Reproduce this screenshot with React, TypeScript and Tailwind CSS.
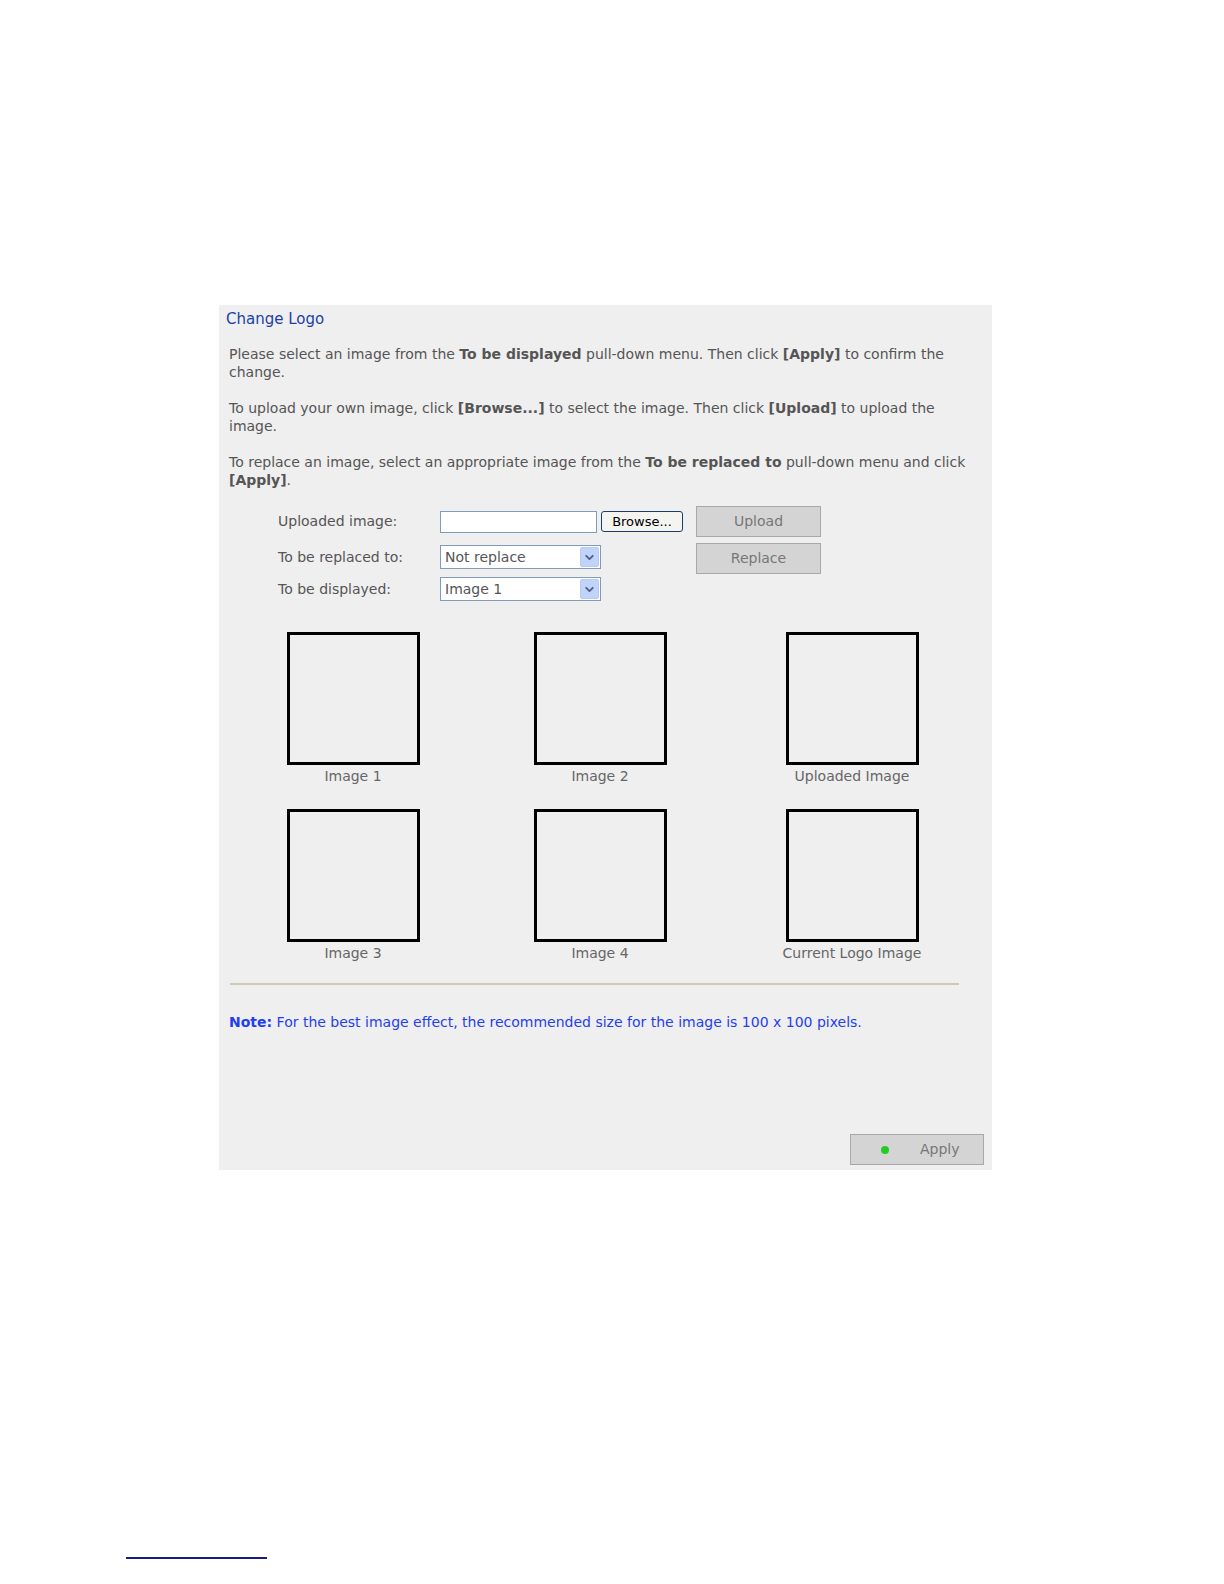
import { ChevronDown } from "lucide-react";

const font = { fontFamily: '"DejaVu Sans", Verdana, sans-serif' };

function Select({ value }: { value: string }) {
  return (
    <div className="flex h-[24px] w-[161px] items-center justify-between border border-[#7f9db9] bg-white pl-[4px] pr-[1px]">
      <span className="text-[14px] text-[#555]">{value}</span>
      <span className="flex h-[20px] w-[19px] items-center justify-center rounded-[2px] border border-[#b9c9ef] bg-[#c1d3fb]">
        <ChevronDown className="h-[13px] w-[13px] text-[#4d6185]" strokeWidth={3.5} />
      </span>
    </div>
  );
}

function GrayButton({ label }: { label: string }) {
  return (
    <div className="flex h-[31px] w-[125px] items-center justify-center border border-[#a8a8a8] bg-[#d4d4d4] text-[14px] text-[#777]">
      {label}
    </div>
  );
}

function Thumb({ label }: { label: string }) {
  return (
    <div className="flex w-[180px] flex-col items-center">
      <div className="h-[133px] w-[133px] border-[3px] border-black" />
      <div className="mt-[2px] text-[14px] leading-[18px] text-[#666]">{label}</div>
    </div>
  );
}

export default function App() {
  return (
    <div className="relative h-[1584px] w-full overflow-hidden bg-white" style={font}>
      <div className="pt-[305px] pl-[219px]">
        <div className="flex h-[865px] w-[773px] flex-col bg-[#efefef] pt-[5px]">
          <div className="pl-[7px] text-[15px] leading-[18px] text-[#1c3fa8]">Change Logo</div>

          <div className="mt-[17px] space-y-[18px] pl-[10px] pr-[14px] text-[14px] leading-[18px] text-[#555]">
            <p>
              Please select an image from the <b>To be displayed</b> pull-down menu. Then click{" "}
              <b>[Apply]</b> to confirm the change.
            </p>
            <p>
              To upload your own image, click <b>[Browse...]</b> to select the image. Then click{" "}
              <b>[Upload]</b> to upload the image.
            </p>
            <p>
              To replace an image, select an appropriate image from the <b>To be replaced to</b>{" "}
              pull-down menu and click <b>[Apply]</b>.
            </p>
          </div>

          <div className="mt-[17px] flex pl-[59px] text-[14px] text-[#555]">
            <div className="flex flex-col">
              <div className="flex h-[31px] items-center">
                <span className="w-[162px]">Uploaded image:</span>
                <div className="h-[22px] w-[157px] border border-[#7f9db9] bg-white" />
                <div className="ml-[4px] flex h-[21px] w-[82px] items-center justify-center rounded-[3px] border border-[#1f3b6e] bg-[#f4f4f0] text-[13px] text-black">
                  Browse...
                </div>
              </div>
              <div className="mt-[5px] flex h-[30px] items-center">
                <span className="w-[162px]">To be replaced to:</span>
                <Select value="Not replace" />
              </div>
              <div className="mt-[5px] flex h-[24px] items-center">
                <span className="w-[162px]">To be displayed:</span>
                <Select value="Image 1" />
              </div>
            </div>
            <div className="ml-[13px] flex flex-col gap-[6px]">
              <GrayButton label="Upload" />
              <GrayButton label="Replace" />
            </div>
          </div>

          <div className="mt-[31px] flex flex-col gap-y-[24px] pl-[44px]">
            <div className="flex">
              <Thumb label="Image 1" />
              <div className="ml-[67px]"><Thumb label="Image 2" /></div>
              <div className="ml-[72px]"><Thumb label="Uploaded Image" /></div>
            </div>
            <div className="flex">
              <Thumb label="Image 3" />
              <div className="ml-[67px]"><Thumb label="Image 4" /></div>
              <div className="ml-[72px]"><Thumb label="Current Logo Image" /></div>
            </div>
          </div>

          <div className="mt-[21px] ml-[11px] h-[2px] w-[729px] bg-[#cfcbb0]" />

          <div className="mt-[28px] pl-[10px] text-[14px] leading-[18px] text-[#1f3ef0]">
            <b>Note:</b> For the best image effect, the recommended size for the image is 100 x 100 pixels.
          </div>

          <div className="mt-auto mb-[5px] flex justify-end pr-[8px]">
            <div className="flex h-[31px] w-[134px] items-center border border-[#a8a8a8] bg-[#d4d4d4] text-[14px] text-[#777]">
              <span className="ml-[30px] h-[8px] w-[8px] rounded-full bg-[#22cc22]" />
              <span className="ml-[31px]">Apply</span>
            </div>
          </div>
        </div>
      </div>

      <div className="absolute left-[126px] top-[1557px] h-[2px] w-[141px] bg-[#1a1a8a]" />
    </div>
  );
}
